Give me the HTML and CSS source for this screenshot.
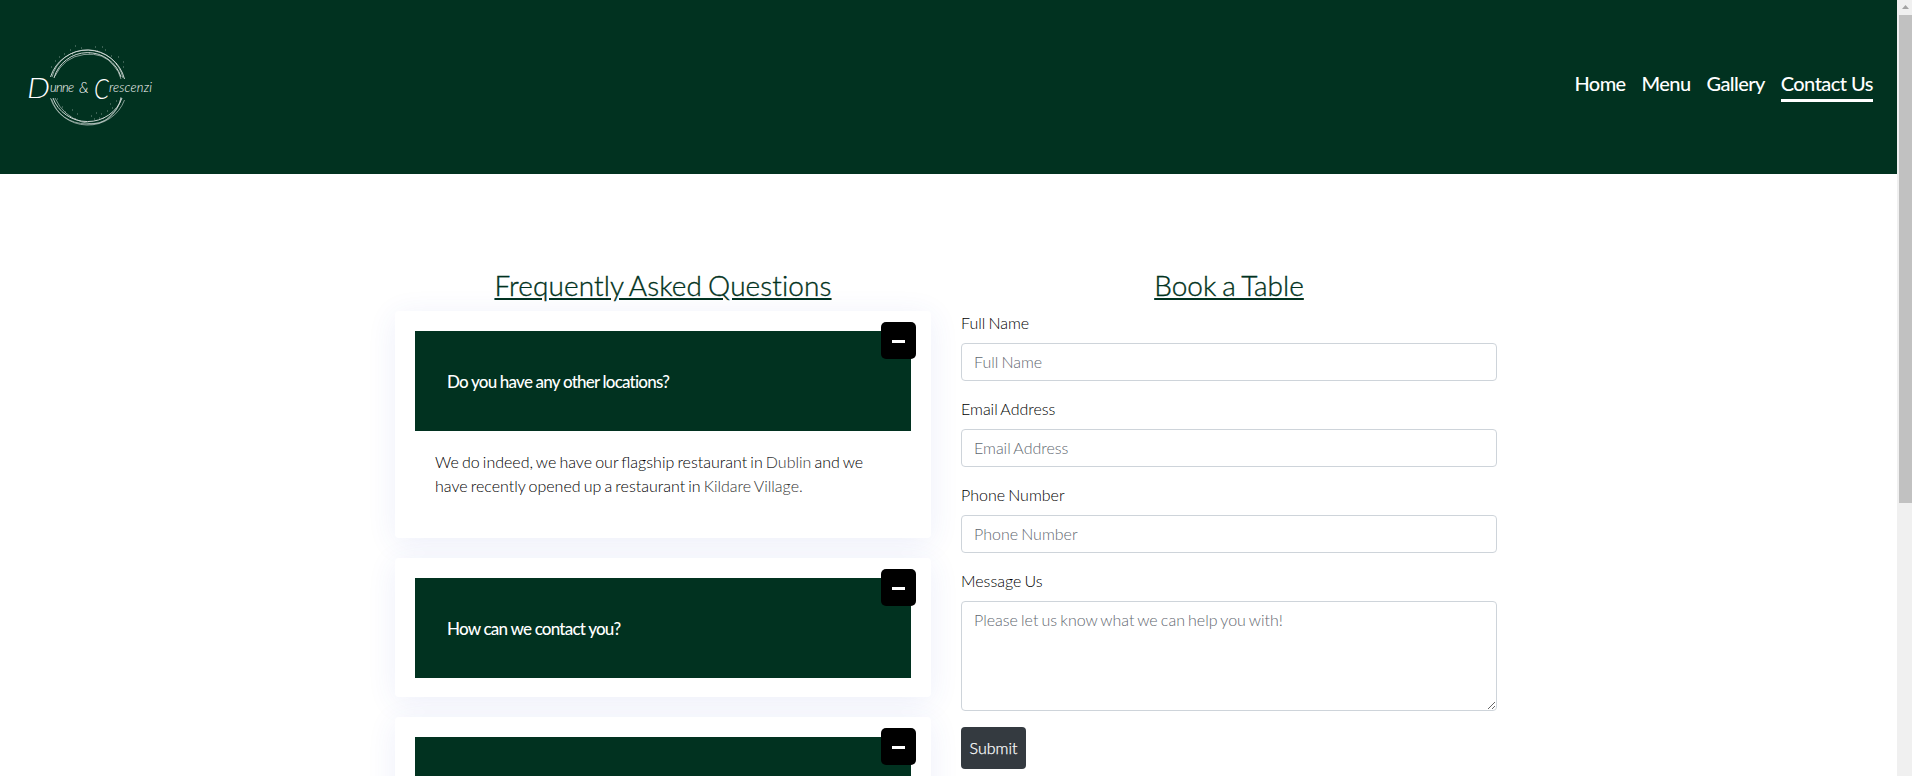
FILE: index.html
```html
<!DOCTYPE html>
<html lang="en">
<head>
<meta charset="utf-8">
<title>Contact Us | Dunne &amp; Crescenzi</title>
<link rel="stylesheet" href="styles.css">
</head>
<body>
<div class="viewport">
  <div class="page">
    <header class="header">
      <svg class="logo" width="136" height="90" viewBox="20 42 136 90" role="img" aria-label="Dunne &amp; Crescenzi">
        <g class="rings">
          <path class="bold" d="M50.500 77A38.500 38.500 0 0 1 124.500 79"/>
          <path d="M52 77A36.500 36 0 0 1 123 78"/>
          <path class="bold" d="M54 78A35 35 0 0 1 121 77"/>
          <path d="M55 76Q64 57 84 54.500T114 66Q119 71 121 79"/>
          <path d="M50.500 98A39 38 0 0 0 124.500 100"/>
          <path class="bold" d="M53 98A36.500 35 0 0 0 122 98"/>
          <path d="M55 98Q63 116 82 122T112 114Q120 107 121 97"/>
          <path d="M51.500 99Q60 123 87 124T121 98"/>
        </g>
        <path class="dots" d="M55 61h1M59 57h1M70 50h1M75 46h1M81 48h1M95 47h1M102 47h1M97 51h1M105 50h1M111 56h1M118 57h1M123 62h1M116 64h1M64 54h1M72 54h1M89 53h1M123 67h1M51 67h1M57 99h1M62 107h1M65 112h1M72 110h1M77 114h1M70 117h1M75 119h1M91 116h1M96 113h1M101 114h1M99 118h1M107 111h1M112 108h1M116 101h1M94 119h1M103 118h1M110 104h1"/>
        <g class="script">
          <text class="cap" x="27" y="98" textLength="23" lengthAdjust="spacingAndGlyphs">D</text>
          <text x="50" y="92" textLength="24">unne</text>
          <text class="amp" x="79" y="93">&amp;</text>
          <text class="cap" x="94" y="99" textLength="15" lengthAdjust="spacingAndGlyphs">C</text>
          <text x="109" y="92" textLength="43">rescenzi</text>
        </g>
      </svg>
      <nav class="nav">
        <a class="nav-link">Home</a>
        <a class="nav-link">Menu</a>
        <a class="nav-link">Gallery</a>
        <a class="nav-link active">Contact Us</a>
      </nav>
    </header>
    <main class="content">
      <section class="column">
        <h3 class="heading faq">Frequently Asked Questions</h3>
        <div class="card">
          <div class="card-header">Do you have any other locations?</div>
          <span class="toggle"></span>
          <p class="card-body">We do indeed, we have our flagship restaurant in <a class="place">Dublin</a> and we have recently opened up a restaurant in <a class="place">Kildare Village.</a></p>
        </div>
        <div class="card">
          <div class="card-header">How can we contact you?</div>
          <span class="toggle"></span>
        </div>
        <div class="card">
          <div class="card-header"></div>
          <span class="toggle"></span>
        </div>
      </section>
      <section class="column">
        <h3 class="heading">Book a Table</h3>
        <form class="form">
          <div class="field"><label for="name">Full Name</label><input id="name" class="control" placeholder="Full Name"></div>
          <div class="field"><label for="email">Email Address</label><input id="email" class="control" placeholder="Email Address"></div>
          <div class="field"><label for="phone">Phone Number</label><input id="phone" class="control" placeholder="Phone Number"></div>
          <div class="field"><label for="message">Message Us</label><textarea id="message" class="control area" placeholder="Please let us know what we can help you with!"></textarea></div>
          <button class="submit" type="button">Submit</button>
        </form>
      </section>
    </main>
  </div>
  <div class="scrollbar">
    <svg width="15" height="15" viewBox="0 0 15 15"><path d="M5 9h7L8.500 5z" fill="#a3a3a3"/></svg>
    <div class="thumb"></div>
  </div>
</div>
</body>
</html>
```
FILE: styles.css
```css
* { box-sizing: border-box; }
body {
  margin: 0;
  overflow: hidden;
  background: #fff;
  color: #000;
  font: 300 16px/24px Lato, sans-serif;
  word-spacing: -1.2px;
}
.viewport { display: flex; height: 776px; overflow: hidden; }
.page { flex: 1; height: 776px; overflow: hidden; }
.header {
  display: flex;
  justify-content: space-between;
  height: 174px;
  padding: 42px 24px 0 20px;
  background: #013220;
}
.rings { fill: none; stroke: #fff; stroke-width: .65; opacity: .8; }
.bold { stroke-width: 1; }
.dots { stroke: #fff; stroke-width: 1; opacity: .45; }
.script { fill: #fff; font: italic 300 13px Lato, sans-serif; }
.cap { font-size: 28px; }
.amp { font-size: 15px; }
.nav { display: flex; gap: 16px; padding-top: 27px; word-spacing: 0; }
.nav-link {
  height: 33px;
  border-bottom: 3px solid transparent;
  color: #fff;
  font-size: 20px;
  font-weight: 500;
  line-height: 29px;
  letter-spacing: -.6px;
}
.active { border-color: #fff; letter-spacing: -.53px; }
.content { display: flex; gap: 30px; padding: 95px 0 0 395px; }
.column { width: 536px; }
.heading {
  margin: 0 0 8px;
  padding-bottom: 1px;
  color: #013220;
  font-size: 28px;
  font-weight: 300;
  line-height: 33px;
  word-spacing: -1.5px;
  font-variant-ligatures: none;
  -webkit-text-stroke: .35px #013220;
  text-align: center;
  text-decoration: underline;
}
.faq { letter-spacing: .1px; }
.card {
  position: relative;
  margin-bottom: 20px;
  padding: 20px 20px 19px;
  border-radius: 4px;
  background: #fff;
  box-shadow: 0 5px 30px rgba(51, 77, 200, .09);
}
.card-header {
  height: 100px;
  padding-left: 32px;
  background: #013220;
  color: #fff;
  font-size: 17px;
  font-weight: 500;
  line-height: 101px;
  letter-spacing: -.79px;
  word-spacing: 0;
}
.toggle {
  position: absolute;
  top: 11px;
  right: 15px;
  display: grid;
  place-items: center;
  width: 35px;
  height: 37px;
  padding: 2px 1px 0 0;
  border-radius: 5px;
  background: #000;
}
.toggle::before { content: ""; width: 13px; height: 3px; background: #fff; }
.card-body { margin: 0; padding: 19px 20px 21px; }
.place { color: #333; }
.form { display: flex; flex-direction: column; align-items: flex-start; gap: 16px; }
.field { display: flex; flex-direction: column; gap: 8px; width: 100%; }
.control {
  display: block;
  width: 100%;
  height: 38px;
  padding: 5px 12px 7px;
  border: 1px solid #ced4da;
  border-radius: 4px;
  background: #fff;
  font: inherit;
  word-spacing: inherit;
}
.control::placeholder { color: #5f6870; opacity: 1; }
.area { height: 110px; padding: 6px 12px; resize: vertical; }
.submit {
  width: 65px;
  height: 42px;
  padding: 0;
  border: 0;
  border-radius: 4px;
  background: #343a40;
  color: #fff;
  font: 300 16px/24px Lato, sans-serif;
  -webkit-text-stroke: .25px #fff;
}
.scrollbar { width: 15px; background: #f0f0f0; }
.scrollbar svg { display: block; }
.thumb { height: 488px; margin-left: 2px; background: #c1c1c1; }
```
